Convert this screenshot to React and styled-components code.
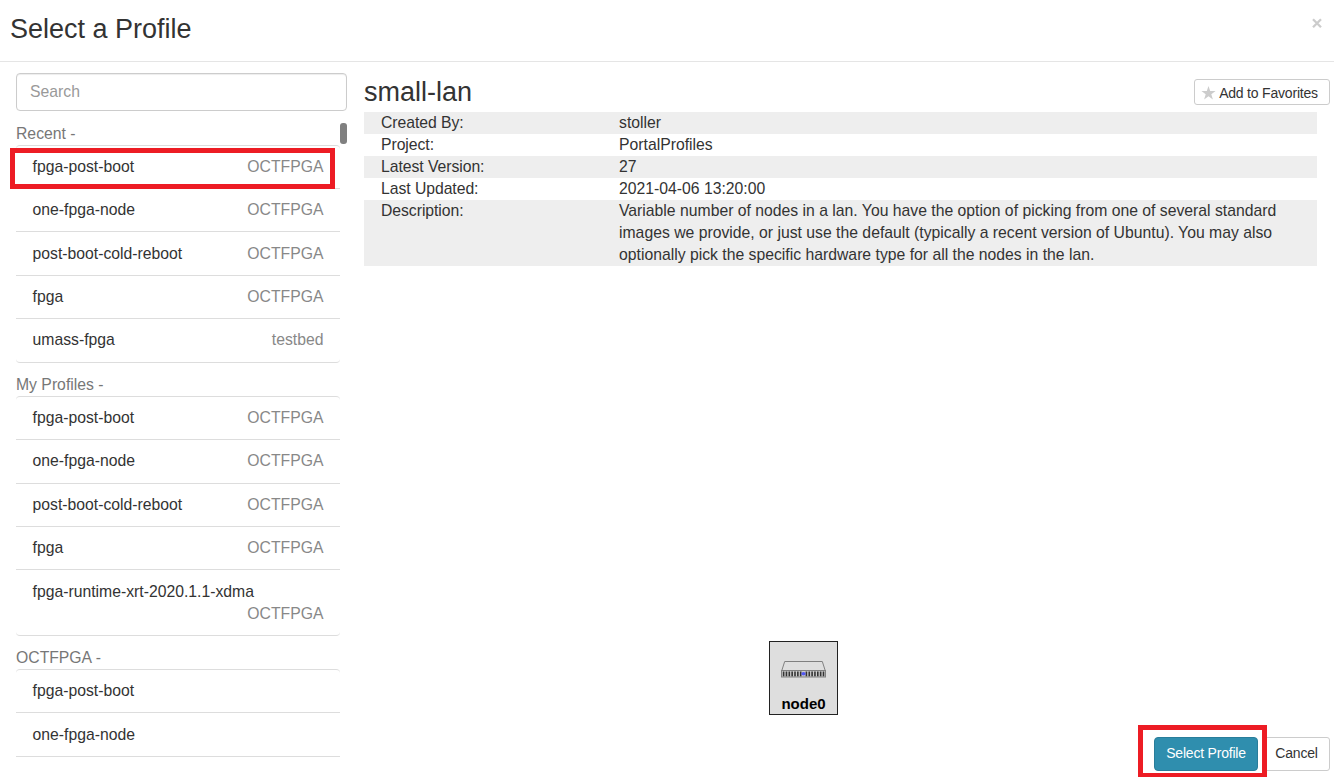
import React from "react";
import styled, { createGlobalStyle } from "styled-components";

const GlobalStyle = createGlobalStyle`
  * { box-sizing: border-box; }
  body {
    margin: 0;
    overflow: hidden;
    background: #fff;
    color: #333;
    font: 15.75px/22px "Liberation Sans", Arial, sans-serif;
  }
`;

const Modal = styled.div`
  position: relative;
  display: flex;
  flex-direction: column;
  width: 1334px;
  height: 777px;
  overflow: hidden;
`;

const Header = styled.header`
  display: flex;
  flex: none;
  justify-content: space-between;
  height: 62px;
  padding: 10px 10px 0;
  border-bottom: 1px solid #e5e5e5;
`;

const Title = styled.h1`
  margin: 0;
  font-size: 27px;
  font-weight: 400;
  line-height: 38px;
`;

const Close = styled.button`
  display: flex;
  align-items: flex-start;
  padding: 8px 1px 0;
  border: 0;
  background: none;
`;

const Body = styled.main`
  display: flex;
  flex: none;
  height: 663px;
  padding-left: 16px;
`;

const Sidebar = styled.aside`
  width: 331px;
  flex: none;
  padding-top: 11px;
`;

const Search = styled.input`
  display: block;
  width: 331px;
  height: 38px;
  padding: 0 13px;
  border: 1px solid #ccc;
  border-radius: 4px;
  box-shadow: inset 0 1px 1px rgba(0, 0, 0, 0.075);
  font: inherit;
  &::placeholder { color: #999; opacity: 1; }
`;

const Scroller = styled.div`
  display: flex;
  justify-content: space-between;
  align-items: flex-start;
  padding-top: 11.65px;
`;

const Groups = styled.div`
  width: 324px;
`;

const Thumb = styled.div`
  width: 7px;
  height: 21px;
  margin-top: 0.35px;
  border-radius: 3px;
  background: #808080;
`;

const GroupLabel = styled.div`
  height: ${(p) => p.$height}px;
  padding-top: ${(p) => p.$height - 22}px;
  color: #777;
`;

const List = styled.ul`
  margin: 0;
  padding: 0;
  list-style: none;
  border-top: 1px solid #ddd;
  border-bottom: ${(p) => (p.$open ? 0 : 1)}px solid #ddd;
  border-radius: ${(p) => (p.$open ? "4px 4px 0 0" : "4px")};
`;

const Item = styled.li`
  display: flex;
  flex-wrap: wrap;
  justify-content: space-between;
  align-content: flex-start;
  height: ${(p) => (p.$tall ? 65.4 : 43.4)}px;
  padding: 10.2px 16.5px 0;
  border-bottom: 1px solid #ddd;
  &:last-child { border-bottom-color: ${(p) => (p.$open ? "#ddd" : "transparent")}; }
  ${List} > &:last-child { height: ${(p) => (p.$tall ? 65.4 : 43.4) - (p.$open ? 0 : 1)}px; }
`;

const Project = styled.span`
  margin-left: auto;
  color: #888;
`;

const Details = styled.section`
  display: flex;
  flex: 1;
  flex-direction: column;
  padding: 15px 4px 0 17px;
`;

const DetailsHead = styled.div`
  display: flex;
  justify-content: space-between;
  height: 35px;
`;

const ProfileName = styled.h2`
  margin: 0;
  font-size: 27px;
  font-weight: 400;
  line-height: 30px;
`;

const Button = styled.button`
  display: flex;
  align-items: center;
  justify-content: center;
  width: ${(p) => p.$w}px;
  height: ${(p) => p.$h}px;
  padding: 0 0 2px;
  border: 1px solid ${(p) => (p.$primary ? "#297d9a" : "#ccc")};
  border-radius: ${(p) => (p.$primary ? 4 : 3)}px;
  background: ${(p) => (p.$primary ? "#2f8eae" : "#fff")};
  color: ${(p) => (p.$primary ? "#fff" : "#333")};
  font: 14px/20px "Liberation Sans", Arial, sans-serif;
  letter-spacing: -0.2px;
  white-space: nowrap;
`;

const FavoriteButton = styled(Button)`
  margin-top: 2px;
  padding: 1px 5px 0 0;
  svg { margin-right: 3px; }
`;

const Table = styled.dl`
  width: 953px;
  margin: 0;
`;

const Row = styled.div`
  display: grid;
  grid-template-columns: 238px 664px;
  padding-left: 17px;
  background: ${(p) => (p.$shade ? "#eee" : "#fff")};
`;

const Label = styled.dt`
  letter-spacing: -0.05px;
`;

const Value = styled.dd`
  margin: 0;
`;

const Topology = styled.div`
  display: flex;
  flex: 1;
  align-items: flex-end;
  padding: 0 0 10px 405px;
`;

const Node = styled.div`
  display: flex;
  flex-direction: column;
  align-items: center;
  width: 69px;
  height: 74px;
  padding-top: 18px;
  border: 1px solid #222;
  background: #dedede;
  color: #000;
  font: bold 15px/18px "Liberation Sans", Arial, sans-serif;
  svg { margin-bottom: 15px; flex: none; }
`;

const Footer = styled.footer`
  display: flex;
  flex: 1;
  justify-content: flex-end;
  align-items: flex-start;
  gap: 5px;
  padding: 12px 4px 0 0;
`;

const Highlight = styled.div`
  position: absolute;
  left: ${(p) => p.$x}px;
  top: ${(p) => p.$y}px;
  width: ${(p) => p.$w}px;
  height: ${(p) => p.$h}px;
  border: solid #ed1c24;
  border-width: 5px 5px ${(p) => p.$bottom || 5}px;
  pointer-events: none;
`;

const recent = [
  ["fpga-post-boot", "OCTFPGA"],
  ["one-fpga-node", "OCTFPGA"],
  ["post-boot-cold-reboot", "OCTFPGA"],
  ["fpga", "OCTFPGA"],
  ["umass-fpga", "testbed"],
];

const groups = [
  { label: "Recent -", height: 22, items: recent },
  {
    label: "My Profiles -",
    height: 33.2,
    items: [...recent.slice(0, 4), ["fpga-runtime-xrt-2020.1.1-xdma", "OCTFPGA", true]],
  },
  { label: "OCTFPGA -", height: 33.35, open: true, items: [["fpga-post-boot"], ["one-fpga-node"]] },
];

const details = [
  ["Created By:", "stoller"],
  ["Project:", "PortalProfiles"],
  ["Latest Version:", "27"],
  ["Last Updated:", "2021-04-06 13:20:00"],
  [
    "Description:",
    "Variable number of nodes in a lan. You have the option of picking from one of several standard images we provide, or just use the default (typically a recent version of Ubuntu). You may also optionally pick the specific hardware type for all the nodes in the lan.",
  ],
];

function ServerIcon() {
  const slots = [...Array(15).keys()].filter((i) => i !== 7);
  return (
    <svg width="45" height="20" viewBox="0 0 45 20">
      <path d="M.8 10.5 3.7 1.5h37.6L44.2 10.5z" fill="#dedede" stroke="#808080" />
      <rect x="0.5" y="10.5" width="44" height="6.5" fill="#ccc" stroke="#808080" />
      {slots.map((i) => (
        <rect key={i} x={1.8 + i * 2.85} y="11.5" width="1.6" height="4.8" fill="#333" />
      ))}
      <ellipse cx="22.5" cy="13.8" rx="2.2" ry="1.7" fill="#5358ef" />
    </svg>
  );
}

export default function App() {
  return (
    <Modal>
      <GlobalStyle />
      <Header>
        <Title>Select a Profile</Title>
        <Close aria-label="Close">
          <svg width="12" height="11" viewBox="0 0 12 11">
            <path d="M2 1.2 10 9.2M10 1.2 2 9.2" stroke="#ccc" strokeWidth="2.3" />
          </svg>
        </Close>
      </Header>
      <Body>
        <Sidebar>
          <Search placeholder="Search" />
          <Scroller>
            <Groups>
              {groups.map((g) => (
                <React.Fragment key={g.label}>
                  <GroupLabel $height={g.height}>{g.label}</GroupLabel>
                  <List $open={g.open}>
                    {g.items.map(([name, project, tall]) => (
                      <Item key={name} $tall={tall} $open={g.open}>
                        <span>{name}</span>
                        {project && <Project>{project}</Project>}
                      </Item>
                    ))}
                  </List>
                </React.Fragment>
              ))}
            </Groups>
            <Thumb />
          </Scroller>
        </Sidebar>
        <Details>
          <DetailsHead>
            <ProfileName>small-lan</ProfileName>
            <FavoriteButton $w={136} $h={26}>
              <svg width="15" height="14" viewBox="0 0 15 14">
                <path d="M7.5 0 9.2 5H14.6L10.3 8.2 11.9 13.4 7.5 10.2 3.1 13.4 4.7 8.2.4 5H5.8z" fill="#ccc" />
              </svg>
              Add to Favorites
            </FavoriteButton>
          </DetailsHead>
          <Table>
            {details.map(([key, value], i) => (
              <Row key={key} $shade={i % 2 === 0}>
                <Label>{key}</Label>
                <Value>{value}</Value>
              </Row>
            ))}
          </Table>
          <Topology>
            <Node>
              <ServerIcon />
              node0
            </Node>
          </Topology>
        </Details>
      </Body>
      <Footer>
        <Button $primary $w={104} $h={34}>Select Profile</Button>
        <Button $w={67} $h={34}>Cancel</Button>
      </Footer>
      <Highlight $x={10} $y={148} $w={325} $h={41} />
      <Highlight $x={1138} $y={725} $w={129} $h={52} $bottom={4} />
    </Modal>
  );
}
